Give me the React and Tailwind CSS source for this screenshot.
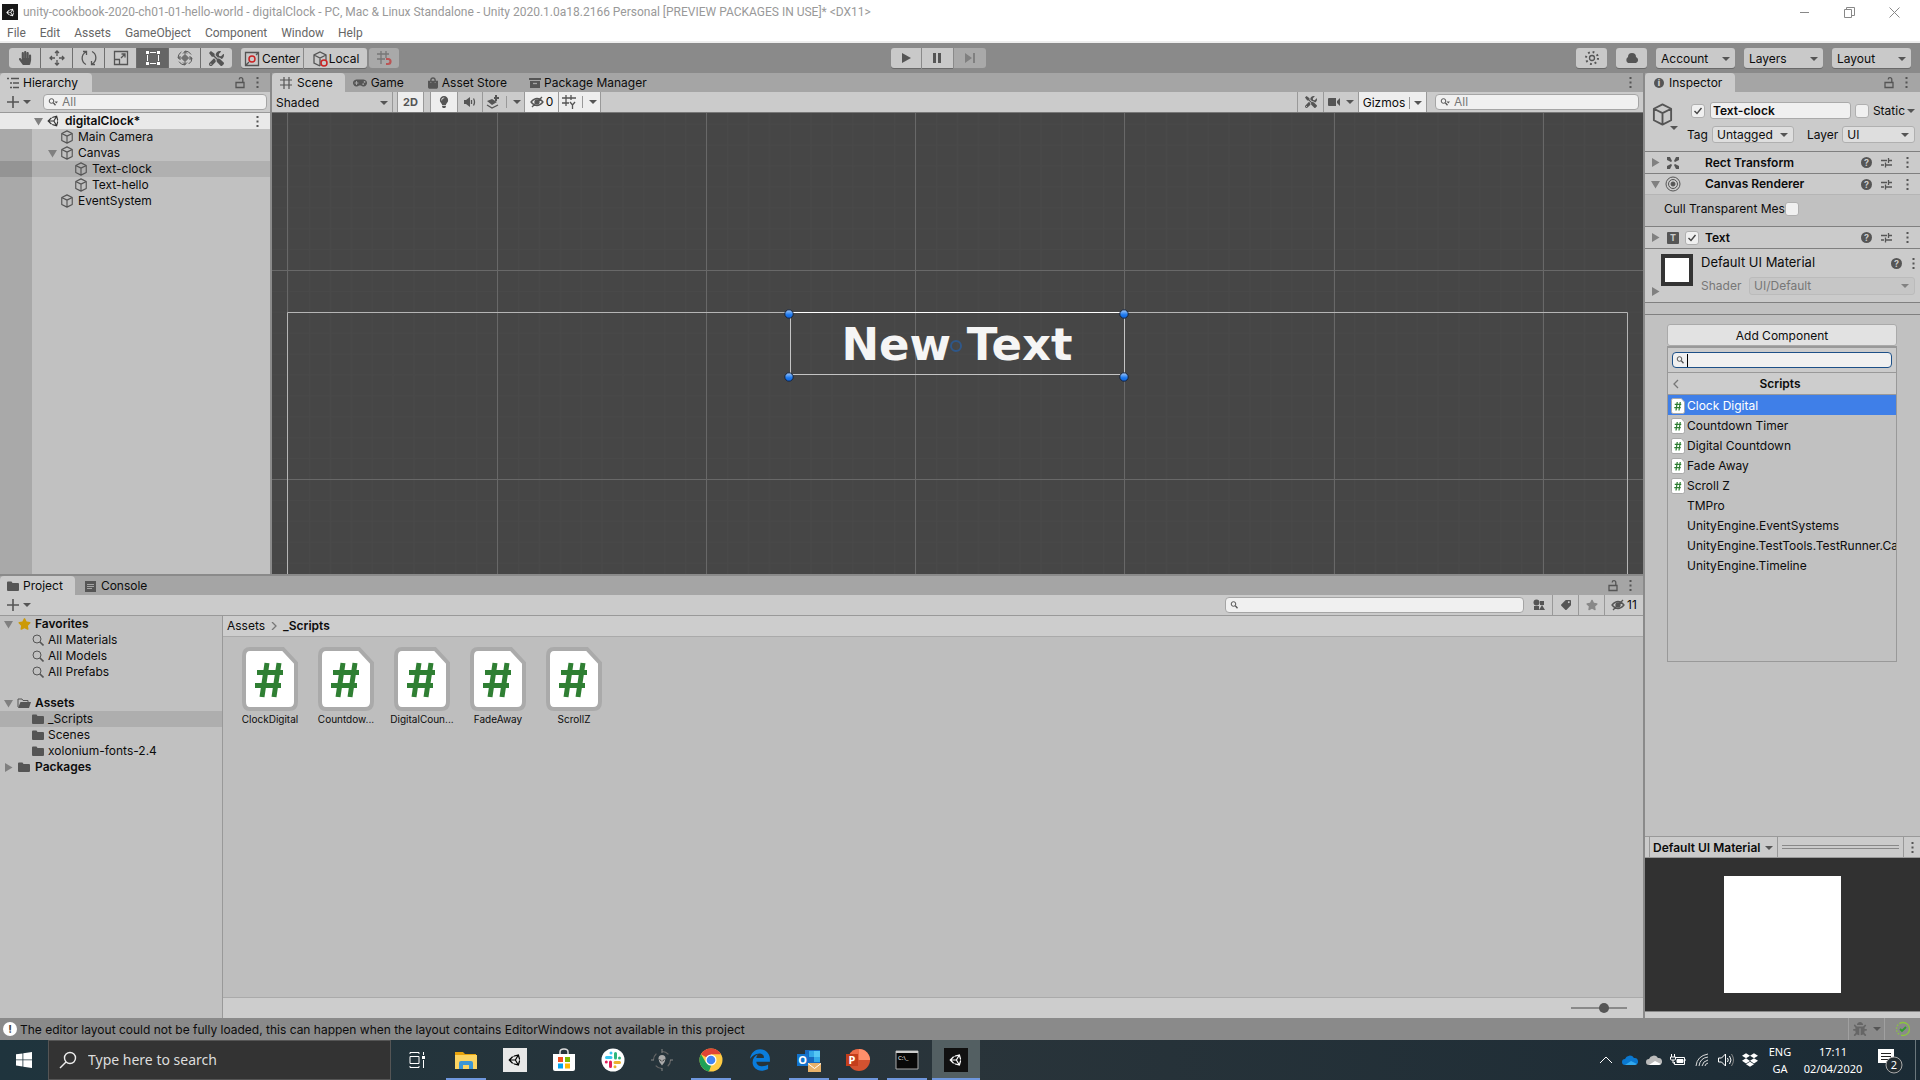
import React from "react";
import { FaUnity, FaHandPaper, FaTools, FaGamepad, FaLightbulb, FaTag, FaStar, FaShoppingBag, FaBug, FaDropbox, FaEdgeLegacy } from "react-icons/fa";

const Caret = ({ className = "" }) => (
  <svg className={`h-1 w-2 shrink-0 fill-[#555] ${className}`} viewBox="0 0 8 4" aria-hidden="true"><path d="M0 0h8L4 4z" /></svg>
);

const Fold = ({ open, className = "" }) => (
  <svg className={`h-[9px] w-[9px] shrink-0 fill-[#808080] ${className}`} viewBox="0 0 9 9" aria-hidden="true">
    <path d={open ? "M0 1h9L4.500 8.500z" : "M1 0v9l7.500-4.500z"} />
  </svg>
);

const Icon = ({ box = 16, className = "h-4 w-4", children }) => (
  <svg className={`shrink-0 ${className}`} viewBox={`0 0 ${box} ${box}`} fill="none" stroke="#555" strokeWidth="1.300" aria-hidden="true">{children}</svg>
);

const Cube = ({ className = "h-[14px] w-[14px]" }) => (
  <Icon className={className}>
    <path strokeLinejoin="round" d="M8 1l6 3v8l-6 3-6-3V4zM2 4l6 3 6-3M8 7v8" />
  </Icon>
);

const Lock = () => (
  <Icon box={12} className="h-3 w-3"><path d="M2 5.500h8v5H2zM8.800 5V2.500a1.800 1.800 0 0 0-3.600 0" /></Icon>
);

const Kebab = () => (
  <svg className="h-[11px] w-[3px] shrink-0 fill-[#555]" viewBox="0 0 3 11" aria-hidden="true">
    <path d="M.5 0h2v2h-2zM.5 4.500h2v2h-2zM.5 9h2v2h-2z" />
  </svg>
);

const KebabButton = ({ label, className = "" }) => (
  <button aria-label={label} className={`flex w-3 items-center justify-center ${className}`}><Kebab /></button>
);

const Plus = () => (
  <Icon box={12} className="h-3 w-3"><path strokeWidth="1.600" d="M6 0v12M0 6h12" /></Icon>
);

const Folder = () => (
  <svg className="h-3 w-3 shrink-0 fill-[#555]" viewBox="0 0 12 12" aria-hidden="true"><path d="M0 2.500q0-1 1-1h3.500l1 1.500H11q1 0 1 1V10q0 1-1 1H1q-1 0-1-1z" /></svg>
);

const FolderOpen = () => (
  <svg className="h-3 w-[14px] shrink-0" viewBox="0 0 14 12" aria-hidden="true">
    <path d="M1 10V2h4l1 1.500h5V5" fill="none" stroke="#555" />
    <path d="M3.500 5H14l-2 6H1z" fill="#555" />
  </svg>
);

const Magnifier = () => (
  <Icon box={12} className="h-3 w-3"><circle cx="5" cy="5" r="4" strokeWidth="1" /><path d="M8 8l3.500 3.500" strokeWidth="1.600" /></Icon>
);

const SmallMagnifier = ({ drop }) => (
  <Icon box={10} className="h-[10px] w-[10px]">
    <circle cx="3.500" cy="4" r="2.300" strokeWidth="1" /><path d="M5.300 5.800L7.500 8.300" />
    {drop && <path d="M6.500 4.500h3.500l-1.700 2z" fill="#555" stroke="none" />}
  </Icon>
);

const Grid = ({ className = "h-3 w-3", children }) => (
  <Icon box={12} className={className}><path strokeWidth="1.200" d="M4 0v12M9 0v12M0 3h12M0 8h12" />{children}</Icon>
);

const EyeOff = () => (
  <Icon box={14} className="h-[14px] w-[14px]"><path d="M1 7q6-7 12 0-6 7-12 0zM2 12L12 2" /><circle cx="7" cy="7" r="2" fill="#555" /></Icon>
);

const Help = () => (
  <span className="flex h-[11px] w-[11px] shrink-0 items-center justify-center rounded-full bg-[#555] text-[9px] font-bold leading-[11px] text-[#cbcbcb]">?</span>
);

const Sliders = () => (
  <Icon box={11} className="h-[11px] w-[11px]"><path d="M0 3.500h6M8 3.500h3M7.500 1v5M0 8h3M5 8h6M4.500 5.500v5" /></Icon>
);

const ScriptIcon = ({ className = "h-4 w-[14px]" }) => (
  <svg className={`shrink-0 ${className}`} viewBox="0 0 56 64" aria-hidden="true">
    <path d="M8 2h33l13 14v39q0 7-7 7H8q-6 0-6-7V9q0-7 6-7z" fill="#fff" stroke="#aaa" strokeWidth="4" />
    <path d="M25 16l-5 34M37 16l-5 34M15 25.500h26M13 38.500h26" stroke="#2f7f33" strokeWidth="5" fill="none" />
  </svg>
);

const Tab = ({ active, icon, children, className = "px-2" }) => (
  <button className={`flex h-[19px] items-center gap-1 pt-px ${active ? "rounded-t bg-[#cbcbcb]" : ""} ${className}`}>
    {icon}<span className="whitespace-nowrap">{children}</span>
  </button>
);

const SearchBox = ({ label, placeholder, className = "", drop }) => (
  <label className={`flex h-4 items-center gap-1 rounded border border-[#a5a5a5] bg-[#f0f0f0] px-1 ${className}`}>
    <SmallMagnifier drop={drop} />
    <input aria-label={label} placeholder={placeholder} className="min-w-0 flex-1 bg-transparent text-xs leading-[14px] outline-none placeholder:text-[#777]" />
  </label>
);

const Select = ({ label, value, className = "", disabled }) => (
  <span className={`relative flex items-center rounded-[3px] border ${disabled ? "border-[#bbb] bg-[#c6c6c6] text-[#777]" : "border-[#b0b0b0] bg-[#dedede]"} ${className}`}>
    <select aria-label={label} disabled={disabled} className="h-full w-full appearance-none bg-transparent pl-1 pr-4 text-xs leading-4 outline-none">
      <option>{value}</option>
    </select>
    <Caret className={`pointer-events-none absolute right-[5px] ${disabled ? "opacity-60" : ""}`} />
  </span>
);

const Check = ({ label, checked }) => (
  <span className="relative flex h-[14px] w-[14px] shrink-0">
    <input type="checkbox" aria-label={label} defaultChecked={checked} className="peer h-[14px] w-[14px] appearance-none rounded-[3px] border border-[#b0b0b0] bg-[#f0f0f0]" />
    <svg className="pointer-events-none absolute inset-0 hidden h-[14px] w-[14px] peer-checked:block" viewBox="0 0 14 14" fill="none" stroke="#444" strokeWidth="1.400" aria-hidden="true"><path d="M3.500 7L6 9.500 10.500 4" /></svg>
  </span>
);

function TitleBar() {
  return (
    <header className="border-b-2 border-[#eee] bg-white font-['Roboto',sans-serif]">
      <div className="flex h-6 items-center pr-[3px]">
        <span className="ml-0.5 flex h-4 w-4 items-center justify-center bg-[#181818] text-[9px] text-white"><FaUnity /></span>
        <h1 className="ml-[5px] flex-1 text-xs text-[#999]">unity-cookbook-2020-ch01-01-hello-world - digitalClock - PC, Mac &amp; Linux Standalone - Unity 2020.1.0a18.2166 Personal [PREVIEW PACKAGES IN USE]* &lt;DX11&gt;</h1>
        <div className="flex">
          {[["Minimize", "M1 5.500h9"], ["Restore", "M.5 2.500h7v8h-7zM2.500 2.500v-2h8v8h-3"], ["Close", "M.5.5l10 10M10.500.5l-10 10"]].map(([n, d]) => (
            <button key={n} aria-label={n} className="flex h-5 w-[45px] items-center justify-center">
              <svg className="h-[11px] w-[11px]" viewBox="0 0 11 11" fill="none" stroke="#888" aria-hidden="true"><path d={d} /></svg>
            </button>
          ))}
        </div>
      </div>
      <nav className="flex h-[17px] items-center gap-[14px] px-[7px] text-xs text-[#666]">
        {["File", "Edit", "Assets", "GameObject", "Component", "Window", "Help"].map((m) => <button key={m} className="leading-4">{m}</button>)}
      </nav>
    </header>
  );
}

const toolIcons = [
  ["Hand", <FaHandPaper className="h-[14px] w-[14px] text-[#555]" />],
  ["Move", <Icon><path d="M8 1v5M8 10v5M1 8h5M10 8h5M6 3l2-2 2 2M6 13l2 2 2-2M3 6L1 8l2 2M13 6l2 2-2 2" /></Icon>],
  ["Rotate", <Icon><path d="M5 14.500A7 7 0 0 1 5 2M2 1.500h3.500V5M11 1.500A7 7 0 0 1 11 14M14 14.500h-3.500V11" /></Icon>],
  ["Scale", <Icon><path d="M1.500 1.500h13v13h-13zM1.500 9.500h5v5M8 8l4-4M8.500 4H12v3.500" /></Icon>],
  ["Rect", <Icon><path stroke="#fff" strokeWidth="1" d="M5 2.500h6M5 13.500h6M2.500 5v6M13.500 5v6" /><path fill="#fff" stroke="none" d="M1 1h3v3H1zM12 1h3v3h-3zM1 12h3v3H1zM12 12h3v3h-3z" /></Icon>],
  ["Transform", <Icon><g strokeWidth="1"><circle cx="8" cy="8" r="7" strokeDasharray="7 4" /><path d="M8 1v14M1 8h14M6 3.500L8 1.500l2 2M6 12.500l2 2 2-2M3.500 6l-2 2 2 2M12.500 6l2 2-2 2M6 6h4v4H6z" /></g></Icon>],
  ["Custom tools", <FaTools className="h-[15px] w-[15px] text-[#555]" />],
];

const barButton = "flex h-5 items-center bg-[#c9c9c9] shadow-[0_1px_0_#6a6a6a]";

function Toolbar() {
  return (
    <div className="flex h-[30px] items-center bg-[#8a8a8a] px-[9px]">
      <div className="flex flex-1 items-center">
        <div className="flex gap-px overflow-hidden rounded-[3px] bg-[#6f6f6f]">
          {toolIcons.map(([n, i]) => (
            <button key={n} aria-label={n} className={`flex h-5 w-[31px] items-center justify-center ${n === "Rect" ? "bg-[#656565]" : "bg-[#c9c9c9]"}`}>{i}</button>
          ))}
        </div>
        <div className="ml-[9px] flex gap-px">
          <button className={`${barButton} w-[62px] justify-center gap-0.5 rounded-l-[3px] pt-px text-xs`}>
            <Icon><path d="M1.500 1.500h13v13h-13zM12 4l2-2M2 14l3-3" /><circle cx="8" cy="8" r="3" stroke="#c22" strokeWidth="1.500" /></Icon>Center
          </button>
          <button className={`${barButton} w-[63px] justify-center gap-px rounded-r-[3px] pt-px text-xs`}>
            <Icon><path d="M8 15l-6-3V4l6-3 6 3v5M2 4l6 3 6-3M8 7v8" /><circle cx="12" cy="12" r="3" stroke="#c22" strokeWidth="1.500" /></Icon>Local
          </button>
        </div>
        <button aria-label="Snap" disabled className="ml-0.5 flex h-5 w-[30px] items-center justify-center rounded-[3px] bg-[#a9a9a9]">
          <Icon><path stroke="#777" d="M5 1v13M10 1v7M1 4h12M1 9h8" /><path stroke="#b55" strokeWidth="2.200" d="M10 9h2a2 2 0 0 1 0 5h-2" /></Icon>
        </button>
      </div>
      <div className="mr-11 flex gap-px">
        <button aria-label="Play" className={`${barButton} w-[30px] justify-center rounded-l-[3px]`}><svg className="h-3 w-3 fill-[#555]" viewBox="0 0 12 12"><path d="M2 1l9 5-9 5z" /></svg></button>
        <button aria-label="Pause" className={`${barButton} w-[31px] justify-center`}><svg className="h-3 w-3 fill-[#555]" viewBox="0 0 12 12"><path d="M2 1h3v10H2zM7 1h3v10H7z" /></svg></button>
        <button aria-label="Step" disabled className="flex h-5 w-8 items-center justify-center rounded-r-[3px] bg-[#a9a9a9]"><svg className="h-3 w-3 fill-[#808080]" viewBox="0 0 12 12"><path d="M1 1l7 5-7 5zM9 1h2v10H9z" /></svg></button>
      </div>
      <div className="flex flex-1 justify-end gap-[9px]">
        <button aria-label="Services" className={`${barButton} w-[31px] justify-center rounded-[3px]`}><Icon><circle cx="8" cy="8" r="2.500" /><circle cx="8" cy="8" r="6" strokeWidth="2" strokeDasharray="1.800 2.900" /></Icon></button>
        <button aria-label="Cloud" className={`${barButton} w-[31px] justify-center rounded-[3px]`}><svg className="h-3 w-4 fill-[#555]" viewBox="0 0 16 12"><path d="M4 11a3.500 3.500 0 0 1 0-6 4 4 0 0 1 8 0 3.200 3.200 0 0 1 0 6z" /></svg></button>
        {["Account", "Layers", "Layout"].map((n) => (
          <button key={n} className={`${barButton} w-[79px] rounded-[3px] px-[5px] pt-px text-xs`}><span className="flex-1 text-left">{n}</span><Caret /></button>
        ))}
      </div>
    </div>
  );
}

const hierarchy = [
  ["Main Camera", "pl-[15px]", false],
  ["Canvas", "pl-4", true],
  ["Text-clock", "pl-[42px]", false],
  ["Text-hello", "pl-[42px]", false],
  ["EventSystem", "pl-[15px]", false],
];

function Hierarchy() {
  return (
    <section aria-label="Hierarchy" className="flex w-[270px] shrink-0 flex-col bg-[#c1c1c1]">
      <div className="flex h-[19px] items-center bg-[#a5a5a5] pr-[7px]">
        <Tab active className="gap-1 pl-[7px] pr-[14px]" icon={<Icon box={12} className="h-3 w-3"><path d="M0 1.500h2M4 1.500h8M3 6h2M6 6h6M3 10.500h2M6 10.500h6" /></Icon>}>Hierarchy</Tab>
        <div className="flex-1" />
        <button aria-label="Lock" className="mr-[5px]"><Lock /></button><KebabButton label="Hierarchy menu" />
      </div>
      <div className="flex h-[21px] items-center border-b border-[#999] bg-[#cbcbcb] pl-[7px] pr-[3px]">
        <button aria-label="Create" className="mr-3 flex items-center gap-1"><Plus /><Caret /></button>
        <SearchBox label="Search hierarchy" placeholder="All" drop className="flex-1" />
      </div>
      <div className="flex h-4 items-center bg-[#e9e9e9] pl-[34px] pr-[7px] font-semibold">
        <Fold open /><FaUnity className="ml-1 h-3 w-[13px] text-[#333]" /><span className="ml-[5px] flex-1 leading-4">digitalClock*</span><KebabButton label="Scene menu" />
      </div>
      <ul className="flex flex-1 flex-col">
        {hierarchy.map(([name, pad, open]) => (
          <li key={name} className={`flex h-4 leading-4 ${name === "Text-clock" ? "bg-[#b0b0b0]" : ""}`}>
            <span className={`w-8 ${name === "Text-clock" ? "bg-[#949494]" : "bg-[#a9a9a9]"}`} />
            <span className={`flex items-center gap-1 ${pad}`}>
              {open ? <Fold open className="-mr-px" /> : name.startsWith("Text") ? null : <span className="w-[9px]" />}<Cube />{name}
            </span>
          </li>
        ))}
        <li aria-hidden="true" className="flex flex-1"><span className="w-8 bg-[#a9a9a9]" /></li>
      </ul>
    </section>
  );
}

function SceneCanvas() {
  const cols = [225, 434, 643, 852, 1062, 1271];
  return (
    <svg className="min-h-0 w-full flex-1" viewBox="0 0 1371 461" preserveAspectRatio="xMidYMin slice" role="img" aria-label="Scene view">
      <defs>
        <pattern id="minor" x="16" y="157" width="20.900" height="20.900" patternUnits="userSpaceOnUse"><path d="M.5 0v21M0 .5h21" stroke="#494949" fill="none" /></pattern>
        <linearGradient id="knob" x2="0" y2="1"><stop stopColor="#a8ccfa" /><stop offset="0.6" stopColor="#1b78ee" /><stop offset="1" stopColor="#0f63dd" /></linearGradient>
      </defs>
      <rect width="1371" height="461" fill="#464646" />
      <rect width="1371" height="461" fill="url(#minor)" />
      <g stroke="#686868" shapeRendering="crispEdges">
        {cols.map((x) => <path key={x} d={`M${x}.5 0V461`} />)}
        <path d="M0 157.500H1371M0 366.500H1371M15.500 0V200" />
      </g>
      <path d="M15.500 461V199.500H1355.500V461" stroke="#b5b5b5" fill="none" />
      <text x="685" y="247" textAnchor="middle" fontFamily="DejaVu Sans" fontWeight="bold" fontSize="45" fill="#f5f5f5">New Text</text>
      <path d="M518.500 199.500V261.500H852.500V199.500" stroke="#c4c4c4" fill="none" />
      <path d="M518 199.500H853" stroke="#fff" />
      {[[517, 201], [852, 201], [517, 264], [852, 264]].map(([x, y]) => <circle key={`${x}-${y}`} cx={x} cy={y} r="4.200" fill="url(#knob)" stroke="#16243c" />)}
      <circle cx="684" cy="233" r="5" fill="none" stroke="#2f5788" strokeWidth="2" />
    </svg>
  );
}

const seg = "flex h-full items-center justify-center border-r border-[#999]";

function Scene() {
  return (
    <section aria-label="Scene" className="flex min-w-0 flex-1 flex-col">
      <div className="flex h-[19px] items-center bg-[#a5a5a5] pr-[7px]">
        <Tab active className="gap-[5px] pl-2 pr-3" icon={<Grid />}>Scene</Tab>
        <Tab className="gap-1 pl-2 pr-3" icon={<FaGamepad className="h-[14px] w-[14px] text-[#555]" />}>Game</Tab>
        <Tab className="gap-1 pl-3 pr-[10px]" icon={<FaShoppingBag className="h-3 w-[10px] text-[#555]" />}>Asset Store</Tab>
        <Tab className="gap-[3px] pl-3 pr-3" icon={<Icon box={12} className="h-3 w-3"><path fill="#555" stroke="none" d="M0 1h12v2H0zM1 4h10v7H1z" /><path stroke="#a5a5a5" d="M4 6.500h4" /></Icon>}>Package Manager</Tab>
        <div className="flex-1" />
        <KebabButton label="Scene panel menu" />
      </div>
      <div className="flex h-[21px] items-center border-b border-[#777] bg-[#cbcbcb]">
        <button className={`${seg} w-[121px] pl-1 pr-1 pt-px`}><span className="flex-1 text-left">Shaded</span><Caret /></button>
        <button className={`${seg} ml-1 w-[27px] border-l bg-[#eee] text-[11px] font-bold text-[#555]`}>2D</button>
        <button aria-label="Lighting" className={`${seg} ml-1.5 w-7 border-l bg-[#eee]`}><FaLightbulb className="h-3 w-3 text-[#555]" /></button>
        <button aria-label="Audio" className={`${seg} w-[25px]`}><Icon box={12} className="h-3 w-3"><path fill="#555" stroke="none" d="M0 4h2l4-3v10L2 8H0z" /><path d="M7.500 4v4M9.500 2.500q2 3.500 0 7" /></Icon></button>
        <button aria-label="Effects" className={`${seg} w-[42px] gap-1.5`}><Icon box={14} className="h-[14px] w-[14px]"><path fill="#555" stroke="none" d="M1 6l5-2 5 3-5 3zM11 0v6H9V4H8V2h1V0zM8 2h5v2H8z" /><path d="M1 10l5 3 6-3" /></Icon><span className="h-3 w-px bg-[#999]" /><Caret /></button>
        <button aria-label="Hidden objects: 0" className={`${seg} w-[34px] gap-0.5 bg-[#eee]`}><EyeOff />0</button>
        <button aria-label="Grid" className={`${seg} w-[42px] gap-1.5 bg-[#eee]`}><Icon box={14} className="h-[14px] w-[14px]"><path d="M4 0v11M9 0v5M0 3h14M0 8h7M8 7l2.500 3L13 7M10.500 10v4" /></Icon><span className="h-3 w-px bg-[#999]" /><Caret /></button>
        <div className={`${seg} flex-1`} />
        <button aria-label="Editor tools" className={`${seg} w-[26px]`}><FaTools className="h-3 w-3 text-[#555]" /></button>
        <button aria-label="Camera" className={`${seg} w-[35px] gap-1.5`}><Icon box={12} className="h-3 w-3"><path fill="#555" stroke="none" d="M0 3q0-1 1-1h7v8H1q-1 0-1-1zM9 5l3-3v8L9 7z" /></Icon><Caret /></button>
        <button className={`${seg} w-[68px] gap-1 bg-[#eee] pt-px`}>Gizmos<span className="h-3 w-px bg-[#999]" /><Caret /></button>
        <SearchBox label="Search scene" placeholder="All" drop className="ml-2 mr-1 w-[204px]" />
      </div>
      <SceneCanvas />
    </section>
  );
}

function Project() {
  const row = "flex h-4 items-center gap-1 leading-4";
  return (
    <section aria-label="Project" className="flex min-h-0 flex-col bg-[#bebebe]">
      <div className="flex h-[19px] items-center bg-[#a5a5a5] pr-[7px]">
        <Tab active className="gap-1 pl-[7px] pr-3" icon={<Folder />}>Project</Tab>
        <Tab className="gap-[5px] pl-[10px] pr-2" icon={<Icon box={11} className="h-[11px] w-[11px]"><path fill="#555" stroke="none" d="M0 0h11v11H0z" /><path stroke="#a5a5a5" strokeWidth="1" d="M2 3.500h7M2 5.500h7M2 7.500h5" /></Icon>}>Console</Tab>
        <div className="flex-1" />
        <button aria-label="Lock" className="mr-[5px]"><Lock /></button><KebabButton label="Project menu" />
      </div>
      <div className="flex h-[21px] items-center border-b border-[#999] bg-[#cbcbcb] pl-[7px]">
        <button aria-label="Create asset" className="flex items-center gap-1"><Plus /><Caret /></button>
        <div className="flex-1" />
        <SearchBox label="Search project" className="mr-px w-[299px]" />
        <button aria-label="Search by type" className={`${seg} w-7`}><svg className="h-3 w-3 fill-[#555]" viewBox="0 0 12 12"><circle cx="3.500" cy="3.500" r="3" /><path d="M7 2h4v4H7zM1 7h5v4H1zM9 6l3 5H6z" /></svg></button>
        <button aria-label="Search by label" className={`${seg} w-[26px]`}><FaTag className="h-[10px] w-[10px] -scale-x-100 text-[#555]" /></button>
        <button aria-label="Save search" className={`${seg} w-[26px]`}><FaStar className="h-3 w-3 text-[#888]" /></button>
        <button aria-label="Hidden packages: 11" className="flex w-[38px] items-center justify-center gap-0.5"><EyeOff />11</button>
      </div>
      <div className="flex min-h-0 flex-1">
        <nav aria-label="Folders" className="w-[223px] shrink-0 border-r border-[#999] bg-[#c1c1c1]">
          <div className={`${row} pl-1 font-semibold`}><Fold open /><FaStar className="ml-px h-3 w-[13px] text-[#cc9a06]" />Favorites</div>
          {["All Materials", "All Models", "All Prefabs"].map((n) => <div key={n} className={`${row} pl-8`}><Magnifier />{n}</div>)}
          <div className={`${row} mt-[15px] pl-1 font-semibold`}><Fold open /><FolderOpen />Assets</div>
          {["_Scripts", "Scenes", "xolonium-fonts-2.4"].map((n, i) => <div key={n} className={`${row} pl-8 ${i === 0 ? "bg-[#aeaeae]" : ""}`}><Folder />{n}</div>)}
          <div className={`${row} pl-1 font-semibold`}><Fold /><span className="ml-px"><Folder /></span><span className="ml-px">Packages</span></div>
        </nav>
        <div className="flex min-w-0 flex-1 flex-col">
          <div className="flex h-[21px] items-center gap-1.5 border-b border-[#aaa] bg-[#cdcdcd] pl-1">
            <a href="#assets">Assets</a>
            <Icon box={6} className="h-2 w-1.5"><path d="M1 -1l4 4-4 4" stroke="#777" /></Icon>
            <span className="font-semibold">_Scripts</span>
          </div>
          <ul className="flex flex-1 items-start pl-[9px] pt-[10px]">
            {["ClockDigital", "Countdow...", "DigitalCoun...", "FadeAway", "ScrollZ"].map((n) => (
              <li key={n} className="flex w-[76px] flex-col items-center">
                <ScriptIcon className="h-16 w-14" />
                <span className="mt-px text-[10px] leading-[14px]">{n}</span>
              </li>
            ))}
          </ul>
          <div className="flex h-[21px] items-center justify-end border-t border-[#aaa] bg-[#cdcdcd] pr-4">
            <input type="range" aria-label="Icon size" min="0" max="100" defaultValue="60" className="h-3 w-14 appearance-none bg-transparent [&::-webkit-slider-runnable-track]:h-0.5 [&::-webkit-slider-runnable-track]:bg-[#8a8a8a] [&::-webkit-slider-thumb]:mt-[-4px] [&::-webkit-slider-thumb]:h-[10px] [&::-webkit-slider-thumb]:w-[10px] [&::-webkit-slider-thumb]:appearance-none [&::-webkit-slider-thumb]:rounded-full [&::-webkit-slider-thumb]:bg-[#555]" />
          </div>
        </div>
      </div>
    </section>
  );
}

const ComponentRow = ({ open, icon, name, toggle, className = "" }) => (
  <div className={`flex h-[22px] items-center border-t border-[#808080] bg-[#cbcbcb] pl-[6px] pr-[7px] ${className}`}>
    <Fold open={open} />
    <span className="ml-[5px] flex w-4 justify-center">{icon}</span>
    <span className="ml-1 w-5">{toggle}</span>
    <h2 className="flex-1 font-semibold">{name}</h2>
    <button aria-label={`${name} help`}><Help /></button>
    <button aria-label={`${name} presets`} className="ml-[9px] mr-[9px]"><Sliders /></button>
    <KebabButton label={`${name} menu`} />
  </div>
);

function AddComponentMenu() {
  const scripts = ["Clock Digital", "Countdown Timer", "Digital Countdown", "Fade Away", "Scroll Z"];
  const groups = ["TMPro", "UnityEngine.EventSystems", "UnityEngine.TestTools.TestRunner.Callbacks", "UnityEngine.Timeline"];
  return (
    <div className="ml-[22px] mr-[23px] mt-[9px]">
      <button className="h-[22px] w-full rounded-[3px] border border-[#aaa] bg-[#e2e2e2] pt-px">Add Component</button>
      <div className="h-[316px] border border-[#999] border-t-2">
        <div className="bg-[#cbcbcb] px-1 py-1">
          <label className="flex h-4 items-center gap-px rounded border border-[#1d5087] bg-[#f0f0f0] px-[3px]">
            <SmallMagnifier /><span className="h-[13px] w-px bg-black" />
            <input aria-label="Search components" className="min-w-0 flex-1 bg-transparent outline-none" />
          </label>
        </div>
        <div className="flex h-[23px] items-center border-y border-[#999] bg-[#cdcdcd] pl-1">
          <button aria-label="Back"><Icon box={8} className="h-[10px] w-2"><path d="M6 0L2 4l4 4" stroke="#777" /></Icon></button>
          <h3 className="flex-1 pr-4 text-center font-semibold">Scripts</h3>
        </div>
        <ul>
          {scripts.map((n, i) => (
            <li key={n}><button className={`flex h-5 w-full items-center gap-0.5 pl-[3px] pt-px ${i === 0 ? "bg-[#3f7fe8] text-white" : ""}`}><ScriptIcon className="h-4 w-[14px]" />{n}</button></li>
          ))}
          {groups.map((n) => <li key={n}><button className="block h-5 w-full overflow-hidden whitespace-nowrap pl-[19px] pt-px text-left">{n}</button></li>)}
        </ul>
      </div>
    </div>
  );
}

function Inspector() {
  return (
    <aside aria-label="Inspector" className="flex w-[275px] shrink-0 flex-col bg-[#c1c1c1]">
      <div className="flex h-[19px] items-center bg-[#a5a5a5] pr-2">
        <Tab active className="gap-[5px] pl-[9px] pr-[13px]" icon={<span className="flex h-[10px] w-[10px] items-center justify-center rounded-full bg-[#555] text-[8px] font-black text-[#cbcbcb]">i</span>}>Inspector</Tab>
        <div className="flex-1" />
        <button aria-label="Lock" className="mr-[5px]"><Lock /></button><KebabButton label="Inspector menu" />
      </div>
      <div className="flex h-[59px] bg-[#cbcbcb] pl-[6px] pr-[5px] pt-[10px]">
        <button aria-label="Object icon" className="flex h-7 w-[28px] shrink-0 items-end"><Cube className="mb-1 h-[23px] w-[23px]" /><Caret className="-ml-1" /></button>
        <div className="ml-2 flex min-w-0 flex-1 flex-col gap-[7px]">
          <div className="flex h-[17px] items-center pl-[4px]">
            <Check label="Active" checked />
            <input aria-label="Object name" defaultValue="Text-clock" className="ml-[5px] mr-1 h-[17px] min-w-0 flex-1 rounded-[3px] border border-[#aaa] bg-[#f0f0f0] px-0.5 font-semibold outline-none" />
            <Check label="Static" /><button className="ml-1 flex items-center gap-0.5">Static<Caret /></button>
          </div>
          <div className="flex h-[17px] items-center">
            <span>Tag</span><Select label="Tag" value="Untagged" className="ml-1 h-[17px] w-[82px]" />
            <span className="ml-[13px]">Layer</span><Select label="Layer" value="UI" className="ml-1 h-[17px] min-w-0 flex-1" />
          </div>
        </div>
      </div>
      <ComponentRow name="Rect Transform" icon={<Icon box={12} className="h-3 w-3"><path fill="#555" stroke="none" d="M0 0h3l2 4-1 1-4-2zM12 0H9L7 4l1 1 4-2zM0 12h3l2-4-1-1-4 2zM12 12H9L7 8l1-1 4 2z" /></Icon>} />
      <ComponentRow open name="Canvas Renderer" className="border-b border-b-[#b5b5b5]" icon={<Icon><g strokeWidth="1"><circle cx="8" cy="8" r="7" /><circle cx="8" cy="8" r="4.500" /><circle cx="8" cy="8" r="2" fill="#555" /></g></Icon>} />
      <label className="flex h-[31px] items-center pb-1 pl-[19px]">
        <span className="w-[121px] overflow-hidden whitespace-nowrap">Cull Transparent Mes</span><Check label="Cull Transparent Mesh" />
      </label>
      <ComponentRow name="Text" toggle={<Check label="Text enabled" checked />} icon={<span className="flex h-3 w-3 items-center justify-center rounded-[1px] bg-[#555] text-[9px] font-bold text-[#cbcbcb]">T</span>} />
      <div className="flex h-[55px] border-y border-[#808080] bg-[#cbcbcb] pr-[5px]">
        <div className="flex w-14 items-end pb-[6px] pl-[6px]"><Fold className="mr-px" /><span className="mb-[10px] h-8 w-8 border-4 border-[#333] bg-white" /></div>
        <div className="flex-1">
          <div className="flex h-7 items-center"><h2 className="flex-1 text-[13px]">Default UI Material</h2><button aria-label="Material help"><Help /></button><KebabButton label="Material menu" className="-mr-1 ml-[5px]" /></div>
          <div className="flex items-center justify-between text-[#777]"><span>Shader</span><Select disabled label="Shader" value="UI/Default" className="h-[18px] w-[166px]" /></div>
        </div>
      </div>
      <div className="h-3 border-b border-[#808080]" />
      <AddComponentMenu />
      <div className="flex-1" />
      <div className="flex h-[22px] border-y border-[#999] bg-[#cbcbcb] pl-1">
        <button className="flex w-[129px] items-center justify-between border-x border-[#999] pl-[3px] pr-1 pt-px font-semibold">Default UI Material<Caret /></button>
        <div className="mx-1 my-auto h-1 flex-1 border-y border-[#888]" />
        <KebabButton label="Preview menu" className="w-[17px] border-l border-[#999]" />
      </div>
      <div className="flex h-[153px] items-center justify-center bg-[#313131]"><div className="h-[117px] w-[117px] bg-white" /></div>
      <div className="h-[7px] border-t border-[#888] bg-[#cbcbcb]" />
    </aside>
  );
}

function StatusBar() {
  return (
    <footer className="flex h-[22px] items-center bg-[#8a8a8a] pl-[3px]">
      <span className="flex h-[14px] w-[14px] items-center justify-center rounded-full bg-white text-[11px] font-bold text-[#444]">!</span>
      <p className="ml-[3px] flex-1 whitespace-nowrap pt-px">The editor layout could not be fully loaded, this can happen when the layout contains EditorWindows not available in this project</p>
      <button aria-label="Debugger" className="flex h-full w-[37px] items-center justify-center gap-1.5 border-x border-[#a0a0a0]"><FaBug className="h-[14px] w-[14px] text-[#666]" /><Caret /></button>
      <button aria-label="Background tasks" className="flex w-[35px] justify-center"><Icon><circle cx="8" cy="8" r="6.500" stroke="#8cc63f" strokeDasharray="22 2 1.500 1.500 1.500 1.500 1.500 1.500 1.500 1.500" transform="rotate(-90 8 8)" /><path d="M5 8l2 2 4-4" stroke="#2e9f2e" strokeWidth="1.800" /></Icon></button>
    </footer>
  );
}

const AppIcon = ({ children }) => <svg className="h-6 w-6" viewBox="0 0 24 24" aria-hidden="true">{children}</svg>;

const apps = [
  ["Task View", <AppIcon><g fill="none" stroke="#fff"><path d="M5 8.500h9v7H5zM5 6V4.500h9V6M5 18v1.500h9V18M18.500 4v3M18.500 12v8" /></g><path fill="#fff" d="M17 8h3v3h-3z" /></AppIcon>],
  ["File Explorer", <AppIcon><path d="M1 4h8l2 2h11v15H1z" fill="#e8a30c" /><path d="M1 7h22v14H1z" fill="#fcd462" /><path d="M5 21v-6q0-2 2-2h10q2 0 2 2v6h-4v-4H9v4z" fill="#3c96d6" /></AppIcon>, "on"],
  ["Unity Hub", <span className="flex h-6 w-6 items-center justify-center bg-[#e8e8e8] text-black"><FaUnity className="h-[14px] w-[14px]" /></span>],
  ["Store", <AppIcon><path d="M8 7V4q0-3 4-3t4 3v3" fill="none" stroke="#ddd" strokeWidth="1.500" /><path d="M1 6h22v15q0 2-2 2H3q-2 0-2-2z" fill="#fff" /><path fill="#f25022" d="M6 9h5v5H6z" /><path fill="#7fba00" d="M13 9h5v5h-5z" /><path fill="#00a4ef" d="M6 15.500h5v5H6z" /><path fill="#ffb900" d="M13 15.500h5v5h-5z" /></AppIcon>],
  ["Slack", <AppIcon><circle cx="12" cy="12" r="11.500" fill="#fff" /><g strokeWidth="3" strokeLinecap="round"><path stroke="#36c5f0" d="M10 5v.1M5.500 9.500H10" /><path stroke="#2eb67d" d="M14.500 5.500V10M18.500 10v.1" /><path stroke="#ecb22e" d="M14 14.500h4.500M14 18.700v.1" /><path stroke="#e01e5a" d="M9.500 14v4.500M5.300 14v.1" /></g></AppIcon>],
  ["Alienware", <AppIcon><circle cx="12" cy="12" r="8.500" fill="none" stroke="#666" strokeWidth="1.200" strokeDasharray="7 6.350" /><path d="M12 7q3.500 0 3.500 3.500 0 3.500-3.500 7-3.500-3.500-3.500-7Q8.500 7 12 7z" fill="#aaa" /><path d="M9.500 11.500l2 1.500M14.500 11.500l-2 1.500" stroke="#333" /><path d="M12 1v4M12 20v3M1 12h3M20 12h3" stroke="#888" /></AppIcon>],
  ["Chrome", <AppIcon><circle cx="12" cy="12" r="11.500" fill="#fc4" /><path d="M12 12L2 6.300A11.500 11.500 0 0 1 22 6.300H12z" fill="#e04535" /><path d="M2 6.300l5 8.500 5 3-2 5.600A11.500 11.500 0 0 1 2 6.300z" fill="#1ea158" /><circle cx="12" cy="12" r="5.500" fill="#fff" /><circle cx="12" cy="12" r="4.300" fill="#4285f4" /></AppIcon>, "on"],
  ["Edge", <FaEdgeLegacy className="h-[22px] w-[22px] text-[#0a7ddd]" />],
  ["Outlook", <AppIcon><path fill="#1769c0" d="M8 2h15v16H8z" /><path fill="#32a8e8" d="M12 3h5v6h-5zM17 9h6v5h-6z" /><path fill="#55c7f4" d="M17 3h6v6h-6z" /><path fill="#1273cc" d="M0 6h11v12H0z" /><text x="5.500" y="16" fontSize="11" fontWeight="bold" fill="#fff" textAnchor="middle">O</text><path fill="#e8b26a" d="M11 15h13v9H11z" /><path d="M11 15.500l6.500 5 6.500-5" stroke="#fff" fill="none" /></AppIcon>, "on"],
  ["PowerPoint", <AppIcon><circle cx="13" cy="12" r="11" fill="#d35230" /><path d="M13 1a11 11 0 0 1 11 11H13z" fill="#ff8f6b" /><path d="M13 1a11 11 0 0 0-10 6l10 5z" fill="#ed6c47" /><path d="M0 6h12v12H0z" fill="#c43e1c" /><text x="6" y="16" fontSize="11" fontWeight="bold" fill="#fff" textAnchor="middle">P</text></AppIcon>, "on"],
  ["Command Prompt", <AppIcon><path fill="#080808" stroke="#aaa" d="M1 3h22v18H1z" /><path fill="#ccc" d="M1 3h22v2H1z" /><text x="3" y="12" fontSize="6" fill="#fff">C:\_</text></AppIcon>, "on"],
  ["Unity", <span className="flex h-6 w-6 items-center justify-center bg-[#111] text-white"><FaUnity className="h-[14px] w-[14px]" /></span>, "active"],
];

function Taskbar() {
  return (
    <nav aria-label="Taskbar" className="flex h-10 items-center bg-[#23323a] bg-gradient-to-r from-[#1f343d] via-[#29343a] to-[#1b2b35] font-['Noto_Sans',sans-serif] text-white">
      <button aria-label="Start" className="flex h-full w-12 items-center justify-center"><svg className="h-4 w-4 fill-white" viewBox="0 0 16 16"><path d="M0 2.300L6.500 1.400v6.100H0zM7.300 1.300L16 0v7.500H7.300zM0 8.300h6.500v6.200L0 13.600zM7.300 8.300H16V16l-8.700-1.300z" /></svg></button>
      <label className="flex h-full w-[343px] items-center gap-[11px] border border-[#555] bg-[#333] pl-[10px]">
        <svg className="h-[18px] w-[18px]" viewBox="0 0 18 18" fill="none" stroke="#eee" strokeWidth="1.400"><circle cx="11" cy="7" r="5.500" /><path d="M7 11l-6 6" /></svg>
        <input aria-label="Type here to search" placeholder="Type here to search" className="min-w-0 flex-1 bg-transparent text-sm outline-none placeholder:text-[#ddd]" />
      </label>
      <div className="ml-0.5 flex h-full gap-px">
        {apps.map(([name, icon, state]) => (
          <button key={name} aria-label={name} className={`flex h-full w-12 flex-col items-center pt-2 ${state === "active" ? "bg-[#535f62]" : ""}`}>
            <span className="flex h-6 items-center">{icon}</span>
            <span className={`mt-1.5 h-0.5 ${state === "active" ? "w-12" : "w-10"} ${state ? "bg-[#6f97dd]" : ""}`} />
          </button>
        ))}
      </div>
      <div className="flex-1" />
      <div className="flex items-center gap-2">
        <button aria-label="Show hidden icons" className="flex w-4 justify-center"><svg className="h-3 w-3" viewBox="0 0 12 12" fill="none" stroke="#fff"><path d="M0 9l6-6 6 6" /></svg></button>
        <svg className="h-4 w-4" viewBox="0 0 16 16"><path d="M3 13a3 3 0 0 1 0-6 5 5 0 0 1 9-1 3.500 3.500 0 0 1 1 7z" fill="#0a78d0" /><path d="M3 13l6-4 6 3-2 1z" fill="#32a9ee" /></svg>
        <svg className="h-4 w-4" viewBox="0 0 16 16"><path d="M3 13a3 3 0 0 1 0-6 5 5 0 0 1 9-1 3.500 3.500 0 0 1 1 7z" fill="#bbb" /><path d="M3 13l6-4 6 3-2 1z" fill="#fff" /></svg>
        <svg className="h-4 w-4" viewBox="0 0 16 16" fill="none" stroke="#fff"><path d="M5 5.500h9.500v7H4.500V10M14.500 8H16M1.500 2v3M4.500 2v3M0.500 5h5v2q0 1-1 1h-3q-1 0-1-1zM3 8v3h1" /><path fill="#fff" d="M7 7.500h6v3H7z" /></svg>
        <svg className="h-4 w-4" viewBox="0 0 16 16" fill="none" stroke="#ddd"><path d="M2 14Q3 4 14 2M5 14q1-8 9-9M8 14q1-5 6-6M11 14q0-2 3-3" /></svg>
        <svg className="h-4 w-4" viewBox="0 0 16 16" fill="none" stroke="#fff"><path d="M0.500 6h3l4-4v12l-4-4h-3zM9.500 6q1.500 2 0 4M11.500 4q3 4 0 8" /><path stroke="#888" d="M13.500 2q4 6 0 12" /></svg>
        <FaDropbox className="h-4 w-4" />
      </div>
      <button className="ml-2 w-[28px] text-center text-[11px] leading-[17px]">ENG<br />GA</button>
      <button className="ml-2 w-[62px] whitespace-nowrap text-center text-[11px] leading-[17px]">17:11<br />02/04/2020</button>
      <button aria-label="2 notifications" className="relative ml-[14px] mr-[11px] h-7 w-[26px]">
        <svg className="h-7 w-[26px]" viewBox="0 0 26 28"><path fill="#fff" d="M0 3h16v14h-3l-4 4v-4H0z" /><path d="M3 7.500h10M3 10.500h10M3 13.500h7" stroke="#222" /><circle cx="16" cy="19" r="8" fill="#222c31" stroke="#aaa" /><text x="16" y="23" fontSize="11" fill="#fff" textAnchor="middle">2</text></svg>
      </button>
      <button aria-label="Show desktop" className="h-full w-[5px] border-l border-[#6b777c]" />
    </nav>
  );
}

export default function App() {
  return (
    <div className="flex h-screen flex-col overflow-hidden bg-[#8a8a8a] font-['Inter',sans-serif] text-xs text-[#0c0c0c]">
      <TitleBar />
      <Toolbar />
      <main className="flex min-h-0 flex-1 gap-0.5">
        <div className="grid min-w-0 flex-1 grid-rows-[minmax(0,501fr)_minmax(0,442fr)] gap-0.5">
          <div className="flex min-h-0 gap-0.5"><Hierarchy /><Scene /></div>
          <Project />
        </div>
        <Inspector />
      </main>
      <StatusBar />
      <Taskbar />
    </div>
  );
}
